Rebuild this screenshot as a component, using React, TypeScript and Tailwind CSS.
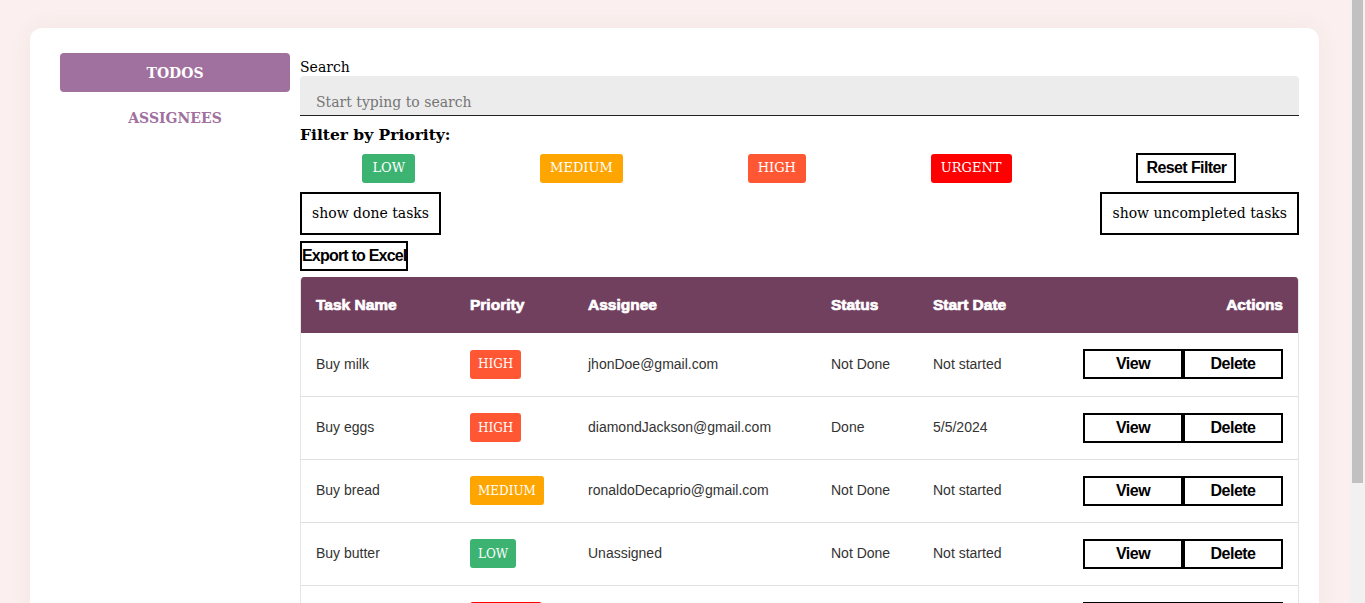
import React from 'react';

const serif = "font-['DejaVu_Serif','Liberation_Serif',serif]";
const sans = "font-['Liberation_Sans',Arial,sans-serif]";

const priorityColors: Record<string, string> = {
  LOW: 'bg-[#3cb371]',
  MEDIUM: 'bg-[#ffa500]',
  HIGH: 'bg-[#ff5733]',
  URGENT: 'bg-[#ff0000]',
};

const todos = [
  { name: 'Buy milk', priority: 'HIGH', assignee: 'jhonDoe@gmail.com', status: 'Not Done', start: 'Not started' },
  { name: 'Buy eggs', priority: 'HIGH', assignee: 'diamondJackson@gmail.com', status: 'Done', start: '5/5/2024' },
  { name: 'Buy bread', priority: 'MEDIUM', assignee: 'ronaldoDecaprio@gmail.com', status: 'Not Done', start: 'Not started' },
  { name: 'Buy butter', priority: 'LOW', assignee: 'Unassigned', status: 'Not Done', start: 'Not started' },
  { name: 'Buy cheese', priority: 'URGENT', assignee: 'Unassigned', status: 'Not Done', start: 'Not started' },
];

function Badge({ label, small }: { label: string; small?: boolean }) {
  return (
    <span
      className={`${serif} ${priorityColors[label]} inline-flex h-[29px] items-center rounded-[3px] text-white ${
        small ? 'px-[8px] text-[12px]' : 'px-[10px] text-[13px]'
      }`}
    >
      {label}
    </span>
  );
}

export default function App() {
  return (
    <div className="min-h-screen bg-[#fbf0ef] pt-[28px] pr-[46px] pb-[30px] pl-[30px]">
      {/* window scrollbar */}
      <div className="fixed top-0 right-0 bottom-0 w-[15px] bg-[#f1f1f1]">
        <div className="mx-[2px] h-[483px] bg-[#c1c1c1]" />
      </div>

      <div className="flex gap-[10px] rounded-xl bg-white pt-[25px] pr-[20px] pb-[60px] pl-[30px] shadow-[0_0_24px_rgba(120,60,60,0.06)]">
        {/* sidebar */}
        <nav className="flex w-[230px] shrink-0 flex-col gap-[6px]">
          <button className={`${serif} h-[39px] rounded bg-[#a0709e] pt-[2px] text-[14px] font-bold text-white`}>TODOS</button>
          <button className={`${serif} h-[39px] rounded pt-[2px] text-[14px] font-bold text-[#a0709e]`}>ASSIGNEES</button>
        </nav>

        {/* main */}
        <main className="flex min-w-0 flex-1 flex-col">
          <label className={`${serif} h-[23px] pt-[4px] text-[14px] leading-[20px] text-black`}>Search</label>
          <div
            className={`${serif} flex h-[40px] items-end rounded-t border-b border-[#222] bg-[#ececec] px-[16px] pb-[2px] text-[14px] text-[#757575]`}
          >
            Start typing to search
          </div>
          <h3 className={`${serif} mt-[8px] text-[15.5px] font-bold leading-[22px] text-black`}>Filter by Priority:</h3>

          <div className="mt-[7px] flex items-center justify-around">
            {['LOW', 'MEDIUM', 'HIGH', 'URGENT'].map((p) => (
              <Badge key={p} label={p} />
            ))}
            <button
              className={`${sans} h-[30px] w-[100px] border-2 border-black text-[16px] font-bold tracking-[-0.6px] text-black`}
            >
              Reset Filter
            </button>
          </div>

          <div className="mt-[9px] flex justify-between">
            <button className={`${serif} h-[43px] border-2 border-black px-[10px] text-[14px] text-black`}>show done tasks</button>
            <button className={`${serif} h-[43px] border-2 border-black px-[10px] text-[14px] text-black`}>
              show uncompleted tasks
            </button>
          </div>

          <div className="mt-[6px]">
            <button
              className={`${sans} h-[30px] w-[108px] overflow-hidden whitespace-nowrap border-2 border-black pl-0 text-left text-[16px] font-bold tracking-[-0.8px] text-black`}
            >
              Export to Excel
            </button>
          </div>

          <div className="mt-[6px] overflow-hidden rounded-t border-x border-[#e5e5e5]">
            <table className={`${sans} w-full table-fixed border-collapse text-left`}>
              <colgroup>
                <col className="w-[153px]" />
                <col className="w-[118px]" />
                <col className="w-[243px]" />
                <col className="w-[102px]" />
                <col className="w-[150px]" />
                <col />
              </colgroup>
              <thead>
                <tr className="h-[56px] bg-[#72405f] text-[15.5px] font-bold text-white [-webkit-text-stroke:0.7px_white]">
                  <th className="px-[15px]">Task Name</th>
                  <th className="px-[16px]">Priority</th>
                  <th className="px-[16px]">Assignee</th>
                  <th className="px-[16px]">Status</th>
                  <th className="px-[16px]">Start Date</th>
                  <th className="px-[15px] text-right">Actions</th>
                </tr>
              </thead>
              <tbody>
                {todos.map((t) => (
                  <tr key={t.name} className="h-[63px] border-b border-[#e0e0e0] text-[14px] text-[#333]">
                    <td className="px-[15px]">{t.name}</td>
                    <td className="px-[16px]">
                      <Badge label={t.priority} small />
                    </td>
                    <td className="px-[16px]">{t.assignee}</td>
                    <td className="px-[16px]">{t.status}</td>
                    <td className="px-[16px]">{t.start}</td>
                    <td className="px-[15px]">
                      <div className="flex justify-end">
                        <button className="h-[30px] w-[100px] border-2 border-black text-[16px] font-bold tracking-[-0.5px] text-black">
                          View
                        </button>
                        <button className="h-[30px] w-[100px] border-2 border-black text-[16px] font-bold tracking-[-0.5px] text-black">
                          Delete
                        </button>
                      </div>
                    </td>
                  </tr>
                ))}
              </tbody>
            </table>
          </div>
        </main>
      </div>
    </div>
  );
}
